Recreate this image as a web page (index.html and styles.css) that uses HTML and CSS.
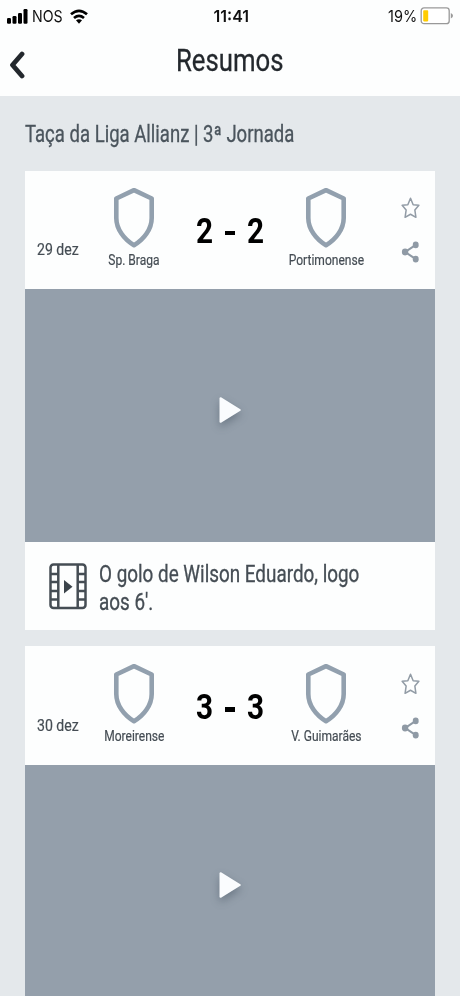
FILE: index.html
```html
<!DOCTYPE html>
<html lang="pt">
<head>
<meta charset="utf-8">
<title>Resumos</title>
<link rel="stylesheet" href="styles.css">
</head>
<body>
<svg class="defs" aria-hidden="true">
  <symbol id="crest" viewBox="0 0 44 62"><path d="M22 3.200 39.700 11.500V31C39.700 42 32 52.500 22 58.200C12 52.500 4.300 42 4.300 31V11.500Z" fill="none" stroke="#92a0ae" stroke-width="4.600" stroke-linejoin="round"/></symbol>
  <symbol id="star" viewBox="0 0 20 24"><path d="M10 1.800 12.800 8.500 18.800 9.200 14.600 14.200 15.700 21.800 10 18.600 4.300 21.800 5.400 14.200 1.200 9.200 7.200 8.500Z" fill="none" stroke="#929ca6" stroke-width="1.600" stroke-linejoin="round"/></symbol>
  <symbol id="share" viewBox="0 0 20 24"><path d="M15.500 4.500 4.500 12 15.500 19.500" fill="none" stroke="#8f9aa5" stroke-width="2.200"/><g fill="#8f9aa5"><ellipse cx="15.500" cy="4.500" rx="3.100" ry="3.500"/><ellipse cx="4.300" cy="12" rx="3.400" ry="3.600"/><ellipse cx="15.500" cy="19.500" rx="3.100" ry="3.500"/></g></symbol>
  <symbol id="play" viewBox="0 0 24 28"><path d="M2.500 2.200V25.800L21.800 14Z" fill="#fafcfe" stroke="#fafcfe" stroke-width="2" stroke-linejoin="round"/></symbol>
</svg>
<header class="top">
  <div class="status">
    <div class="carrier">
      <svg class="signal" viewBox="0 0 21 16"><g fill="#000"><rect x="0" y="10" width="4" height="5.800" rx="1.200"/><rect x="5.500" y="8" width="4" height="7.800" rx="1.200"/><rect x="11" y="5" width="4" height="10.800" rx="1.200"/><rect x="16.500" y="1" width="4" height="14.800" rx="1.200"/></g></svg>
      <span class="nos">NOS</span>
      <svg class="wifi" viewBox="0 0 18 15"><g fill="none" stroke="#000" stroke-width="2.700"><path d="M1 5.300Q9-1.600 17 5.300"/><path d="M4 9Q9 4.800 14 9"/></g><path d="M6 11.300Q9 9 12 11.300L9 14.800Z"/></svg>
    </div>
    <span class="clock">11:41</span>
    <div class="power">
      <span class="percent">19%</span>
      <svg class="battery" viewBox="0 0 34 18"><rect x="1.200" y=".9" width="28" height="15.800" rx="2.800" fill="#fff" stroke="#999" stroke-width="1.300"/><rect x="3.200" y="3.200" width="5" height="11.200" rx=".8" fill="#fc0"/><path d="M30.800 6Q33 7 33 8.800T30.800 11.600Z" fill="#999"/></svg>
    </div>
  </div>
  <nav class="nav">
    <svg class="back" viewBox="0 0 16 28"><path d="M13 3 3.500 14 13 25" fill="none" stroke="#23282d" stroke-width="4.800" stroke-linecap="round" stroke-linejoin="round"/></svg>
    <h1 class="title">Resumos</h1>
  </nav>
</header>
<main class="feed">
  <h2 class="round">Taça da Liga Allianz | 3ª Jornada</h2>
  <article class="card">
    <div class="match">
      <span class="date">29 dez</span>
      <div class="team"><svg class="crest"><use href="#crest"/></svg><span class="name">Sp. Braga</span></div>
      <div class="score"><b>2</b><i></i><b>2</b></div>
      <div class="team"><svg class="crest"><use href="#crest"/></svg><span class="name">Portimonense</span></div>
      <div class="actions"><svg><use href="#star"/></svg><svg><use href="#share"/></svg></div>
    </div>
    <div class="video"><svg class="play"><use href="#play"/></svg></div>
    <div class="caption">
      <svg class="film" viewBox="0 0 38 47"><g fill="none" stroke="#454d54" stroke-width="2.500"><rect x="1.500" y="1.500" width="35" height="43.500" rx="3"/><path d="M9.300 1.500V45M28.700 1.500V45M1.500 11H9.300M1.500 19H9.300M1.500 28H9.300M1.500 36.500H9.300M28.700 11H36.500M28.700 19H36.500M28.700 28H36.500M28.700 36.500H36.500"/></g><path d="M15 17V30.500L23.500 23.800Z" fill="#3c444b"/></svg>
      <p class="text">O golo de Wilson Eduardo, logo<br>aos 6'.</p>
    </div>
  </article>
  <article class="card">
    <div class="match">
      <span class="date">30 dez</span>
      <div class="team"><svg class="crest"><use href="#crest"/></svg><span class="name">Moreirense</span></div>
      <div class="score"><b>3</b><i></i><b>3</b></div>
      <div class="team"><svg class="crest"><use href="#crest"/></svg><span class="name">V. Guimarães</span></div>
      <div class="actions"><svg><use href="#star"/></svg><svg><use href="#share"/></svg></div>
    </div>
    <div class="video"><svg class="play"><use href="#play"/></svg></div>
  </article>
</main>
</body>
</html>
```
FILE: styles.css
```css
* { box-sizing: border-box; margin: 0; padding: 0; }
body { width: 460px; height: 996px; overflow: hidden; background: #e4e8eb; font-family: Roboto, "Liberation Sans", sans-serif; color: #454d54; }
svg { display: block; flex: none; }
.defs { width: 0; height: 0; position: absolute; }
.top { height: 96px; background: #fdfefe; }
.status { height: 32px; display: grid; grid-template-columns: 1fr 1fr 1fr; align-items: center; padding: 0 6px 0 7px; color: #111; font: 16.5px/20px Inter, sans-serif; white-space: nowrap; }
.carrier { display: flex; align-items: center; }
.signal { width: 21px; height: 16px; }
.nos { width: 32px; margin-left: 4px; transform: scaleX(.86); transform-origin: left; }
.wifi { width: 18px; height: 15px; margin-left: 6px; }
.clock { justify-self: center; margin-left: 2px; font-weight: 600; transform: scaleX(.97); }
.power { display: flex; align-items: center; justify-content: flex-end; }
.percent { transform: scaleX(.88); transform-origin: right; margin-right: 3px; }
.battery { width: 34px; height: 18px; }
.nav { height: 64px; display: grid; grid-template-columns: 40px 1fr 40px; }
.back { width: 16px; height: 28px; margin: 19px 0 0 9px; }
.title { justify-self: center; font-size: 31px; font-weight: 400; line-height: 36px; margin-top: 11px; color: #23282d; transform: scaleX(.83); -webkit-text-stroke: .3px; }
.feed { padding: 0 25px; }
.round { height: 74.500px; padding-top: 25px; font-size: 23px; font-weight: 400; line-height: 28px; white-space: nowrap; transform: scaleX(.806); transform-origin: left; color: #4b555d; -webkit-text-stroke: .3px; }
.card { margin-bottom: 15.500px; background: #fdfefe; }
.match { height: 118.800px; display: grid; grid-template-columns: 61px 96px 96px 96px 61px; }
.card + .card .match { height: 119px; padding-top: .8px; }
.date { align-self: start; margin: 68.500px 0 0 12px; font-size: 17px; line-height: 20px; white-space: nowrap; transform: scaleX(.83); transform-origin: left; -webkit-text-stroke: .2px; }
.team { display: flex; flex-direction: column; align-items: center; padding-top: 16px; }
.crest { width: 44px; height: 62px; }
.name { margin-top: 3.500px; font-size: 14.500px; line-height: 18px; white-space: nowrap; transform: scaleX(.83); -webkit-text-stroke: .2px; }
.score { height: 42px; margin-top: 40px; display: flex; align-items: center; justify-content: center; gap: 12px; color: #000; }
.score b { width: 17px; font-size: 35px; line-height: 42px; font-weight: 700; text-align: center; transform: scaleX(.85); display: flex; justify-content: center; }
.score i { width: 10px; height: 4.500px; margin-top: 3px; background: #000; }
.actions { display: flex; flex-direction: column; gap: 20px; padding: 25px 0 0 27px; }
.actions svg { width: 19px; height: 24px; }
.video { height: 252.700px; display: flex; align-items: center; justify-content: center; background: #949fab; }
.play { width: 24px; height: 28px; margin-top: -12px; filter: drop-shadow(0 4px 4px rgba(50, 65, 80, .4)); }
.caption { height: 88.500px; display: flex; padding: 21px 0 0 24px; }
.film { width: 38px; height: 47px; }
.text { margin: -2px 0 0 11.500px; font-size: 23px; line-height: 28.500px; white-space: nowrap; transform: scaleX(.82); transform-origin: left; -webkit-text-stroke: .3px; }
```
